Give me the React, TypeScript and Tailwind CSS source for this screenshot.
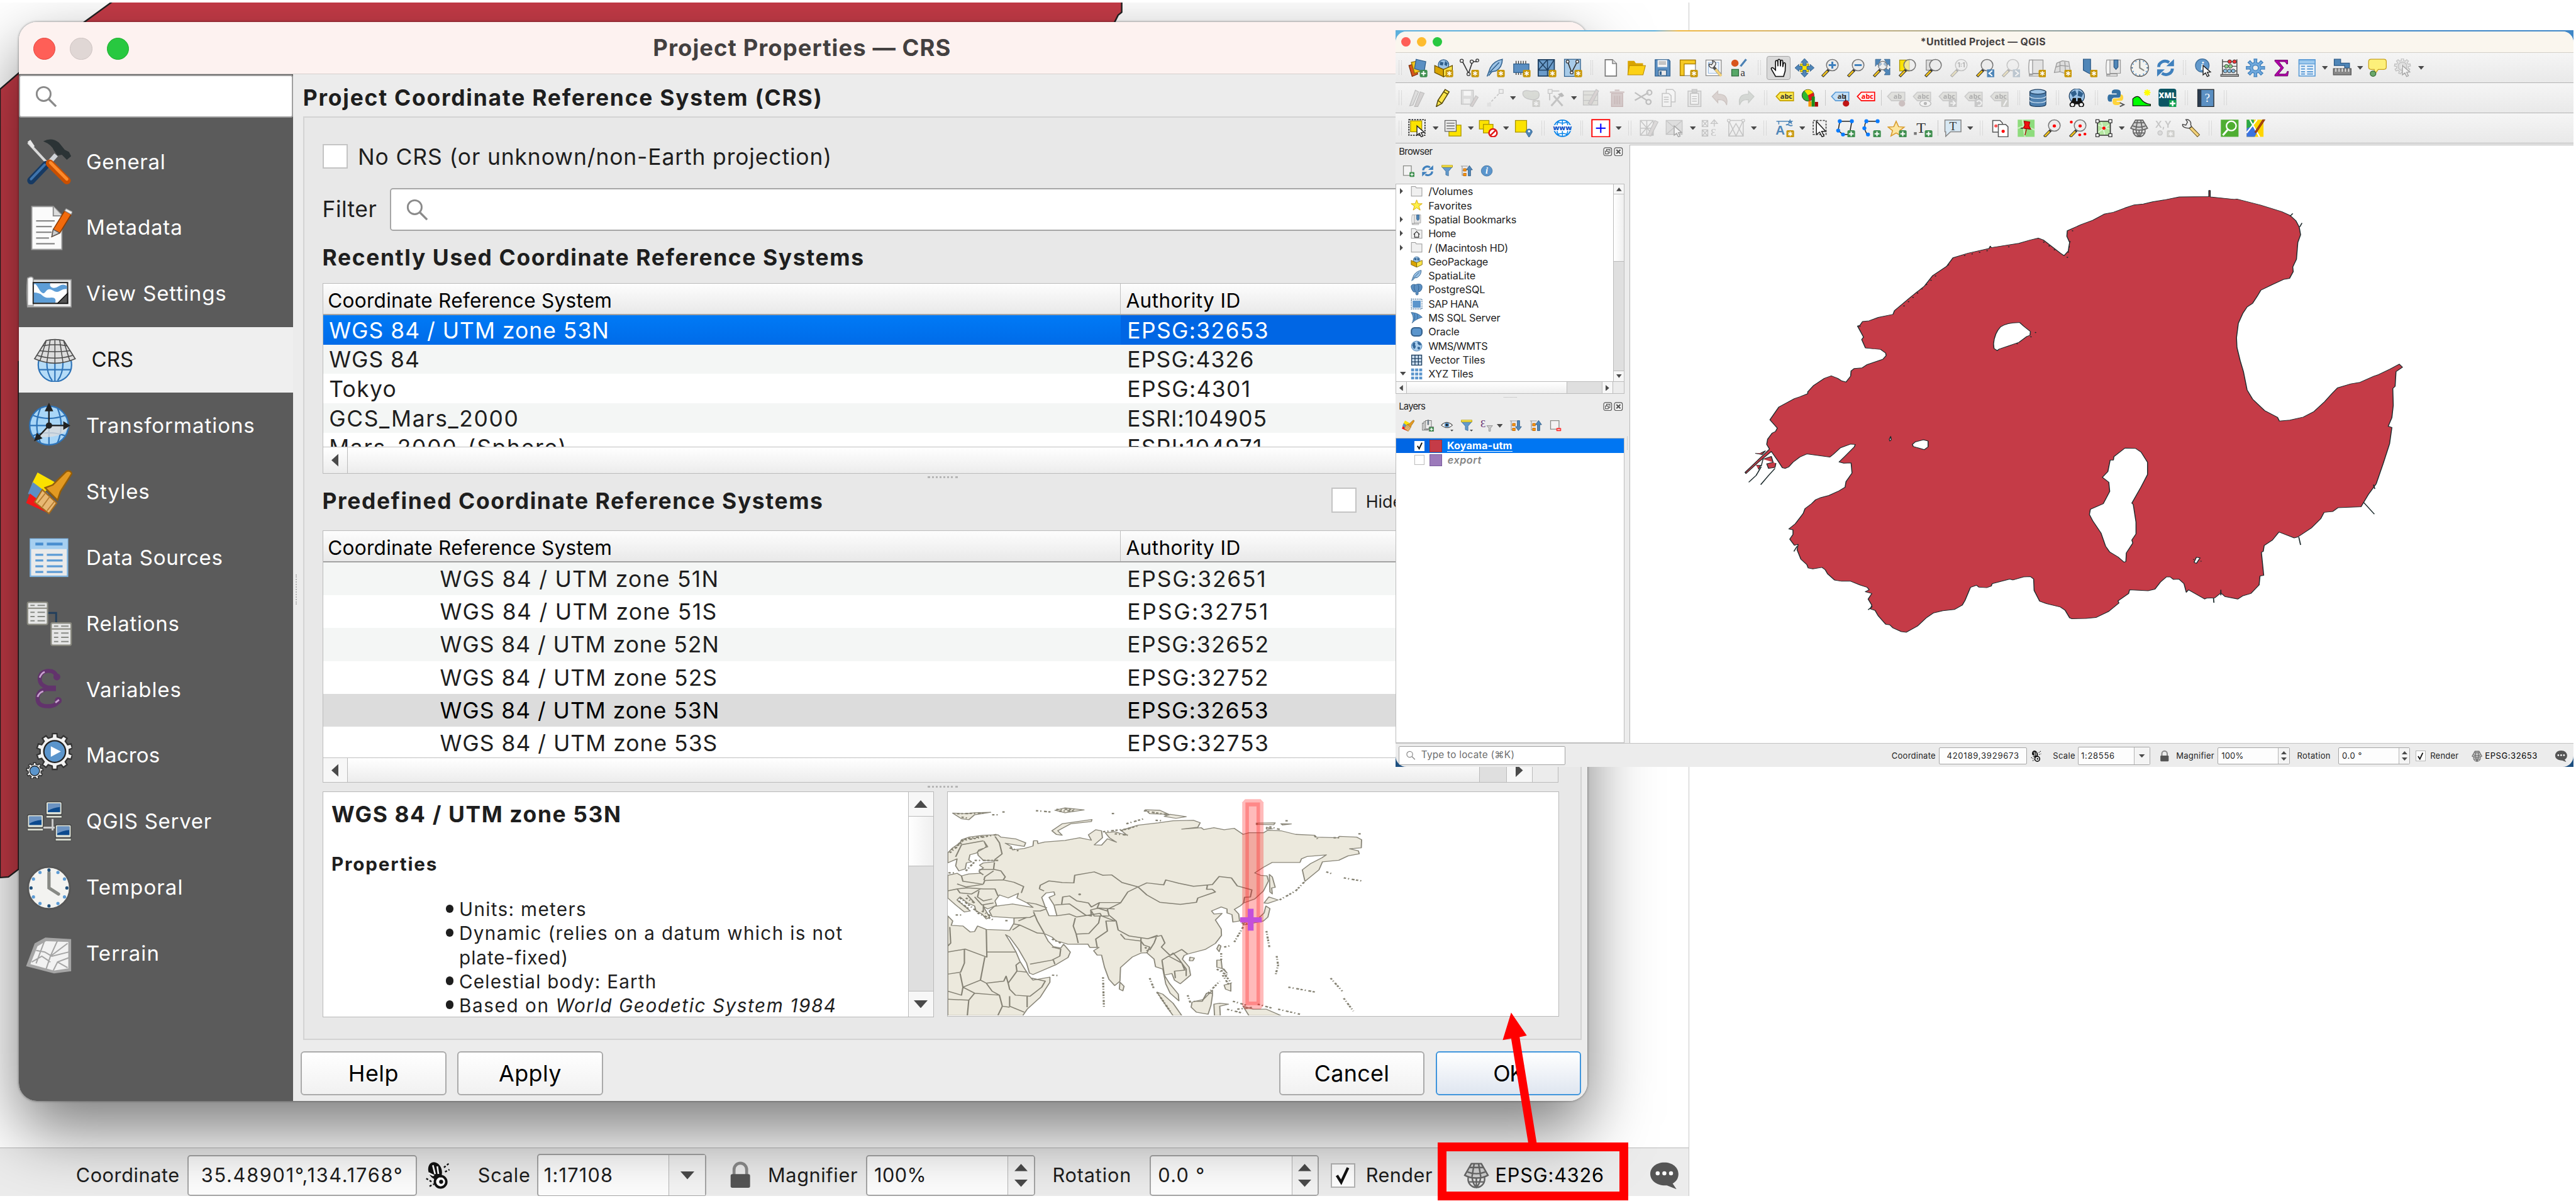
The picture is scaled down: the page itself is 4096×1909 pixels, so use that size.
import React, { useLayoutEffect, useRef, useState, type ReactNode } from "react";

/* Text run that spreads its letters to fill a given width. */
function T({ w, className = "", children }: { w?: number; className?: string; children: ReactNode }) {
  const ref = useRef<HTMLSpanElement>(null);
  const [ls, setLs] = useState(0);
  useLayoutEffect(() => {
    const el = ref.current;
    if (!el || !w) return;
    const n = (el.textContent || "").length || 1;
    setLs((w - el.offsetWidth) / n);
  }, []);
  return (
    <span ref={ref} style={{ letterSpacing: ls }} className={"inline-block shrink-0 whitespace-pre " + className}>
      {children}
    </span>
  );
}

/* ---------- shared icon pieces (24 x 24) ---------- */
const Star = ({ c = "#c8980a" }: { c?: string }) => (
  <g>
    <rect x="14.5" y="14.5" width="9.5" height="9.5" rx="1.5" fill={c} />
    <path d="M19.2 16.2v6M16.6 17.7l5.2 3M21.8 17.7l-5.2 3" stroke="#fff" strokeWidth="1.3" />
  </g>
);
const Plus = () => (
  <g>
    <rect x="14.5" y="14.5" width="9.5" height="9.5" rx="1.8" fill="#3f8f4f" />
    <path d="M19.2 16.2v6M16.2 19.2h6" stroke="#fff" strokeWidth="1.6" />
  </g>
);
const Mag = ({ children, fill = "#ececec" }: { children?: ReactNode; fill?: string }) => (
  <g>
    <path d="M10 14.5L2 23" stroke="#333" strokeWidth="3.6" />
    <path d="M8.5 16L2.6 22.4" stroke="#f4c51c" strokeWidth="2" />
    <circle cx="14.5" cy="8.5" r="7.3" fill={fill} stroke="#777" strokeWidth="1.2" />
    {children}
  </g>
);
const Cursor = () => <path d="M11 9v12l3-2.5 2.2 4.6 2.2-1-2.2-4.5 4-.3z" fill="#fff" stroke="#222" strokeWidth="1.1" />;
const Sheet = () => <path d="M5 1.5h9l5 5v16H5z" fill="#fff" stroke="#777" strokeWidth="1.3" />;
const Globe = () => (
  <g>
    <circle cx="12" cy="12" r="10.5" fill="#a9cdec" stroke="#4a80b4" strokeWidth="1.2" />
    <path d="M5 5c3-2 5 0 4 3s2 3 1 6-2 5-4 3-1-5-3-6zM14 3c3 0 6 2 7 5s-2 3-4 2-4-3-3-7zM14 14c2-1 5 0 5 2s-3 4-4 3-2-4-1-5z" fill="#34689a" />
  </g>
);
const Scroll = () => (
  <g>
    <path d="M6 2h14v17H6z" fill="#e3e3e3" stroke="#999" />
    <path d="M3 2h4v19H3c-1-6-1-13 0-19zM3 20h13v2.5H3z" fill="#f5f5f5" stroke="#999" />
  </g>
);
const Tag = ({ f, s, t = "#333", label = "abc" }: { f: string; s: string; t?: string; label?: string }) => (
  <g>
    <path d="M6 4.5h16.5v11H6L1 10z" fill={f} stroke={s} strokeWidth="1.3" />
    <text x="13.6" y="13.2" fontSize="8.5" fontWeight="700" textAnchor="middle" fill={t} fontFamily="Open Sans, sans-serif">
      {label}
    </text>
  </g>
);
const Funnel = () => (
  <g>
    <path d="M2 4h20l-7.5 9v9l-5-2v-7z" fill="#6299cc" stroke="#3f6f9c" />
    <rect x="2" y="1" width="20" height="3.6" fill="#fce94f" stroke="#b89a00" />
  </g>
);
const Refresh = () => (
  <g fill="none" stroke="#3f80bd" strokeWidth="3.8">
    <path d="M3.500 11c0-6 7-10 13-6" />
    <path d="M20.500 13c0 6-7 10-13 6" />
    <path d="M13 10h9.500V.800z" fill="#3f80bd" stroke="none" />
    <path d="M11 14H1.500v9.200z" fill="#3f80bd" stroke="none" />
  </g>
);
const Expand = ({ down = false }: { down?: boolean }) => (
  <g>
    <path d="M1 2.500h13M3.500 2.500v18h4M3.500 11h4" fill="none" stroke="#999" strokeWidth="1.4" />
    <rect x="6" y="7.500" width="5" height="5" fill="#f90" stroke="#b65c00" />
    <rect x="6" y="17" width="5" height="5" fill="#f90" stroke="#b65c00" />
    <path d={down ? "M15 2h4.500v12H23l-5.800 8-5.700-8H15z" : "M15 22h4.500V10H23l-5.800-8.500L11.500 10H15z"} fill="#4f86b8" stroke="#2d5a86" />
  </g>
);
const Net = ({ c = "#666" }: { c?: string }) => (
  <g fill="#d0d0d0" stroke={c} strokeWidth="1.4">
    <circle cx="12" cy="15.500" r="7.500" fill="#e6e6e6" />
    <path d="M12 13v10M8 13c.5 5 2 8 4 10 2-2 3.500-5 4-10M5.500 18h13" fill="none" />
    <path d="M7.500 1.500h9l6 10.500c-6 3.300-15 3.300-21 0z" />
    <path d="M10 1.500L8 13.500M14 1.500l2 12M6 5h12M4 9c5 2 11 2 16 0" fill="none" />
  </g>
);
const BrushArt = () => (
  <g>
    <path d="M3 8l3-6 9 5-6 6z" fill="#fbe100" />
    <path d="M1 13l2.500-6 8 6-4 5z" fill="#5d8fc4" />
    <path d="M0 18l2-5 8 6 1 4z" fill="#f01818" />
    <path d="M8.500 11l7.500 7-4 5.500-7.500-6z" fill="#e8b873" stroke="#a66b1c" strokeWidth=".7" />
    <path d="M6 18l4-5M8.500 20l4-5.500M11 22l4-5" stroke="#b67d33" strokeWidth=".6" />
    <path d="M10 10l6.500 6.500L18 12l6-9.500q-1-2-3-1L14 8.500z" fill="#e39a22" stroke="#945d08" strokeWidth=".8" />
  </g>
);
const Clock = () => (
  <g>
    <circle cx="12" cy="12" r="11" fill="#f3f3f0" stroke="#555" strokeWidth="1" />
    <path d="M12 4v8l5 3.200" fill="none" stroke="#888a85" strokeWidth="1.700" strokeLinecap="round" />
    {Array.from({ length: 12 }, (_, i) => (
      <circle key={i} cx={12 + 9.400 * Math.sin((i * Math.PI) / 6)} cy={12 - 9.400 * Math.cos((i * Math.PI) / 6)} r=".85" fill={i % 3 ? "#5b9bd5" : "#23527c"} />
    ))}
  </g>
);
const Feather = () => <path d="M2 23L6 12C9 6 15 2 21 1c0 7-3 12-8 15l-5 1-4 5M5 18L17 5" fill="#9cc3e6" stroke="#2f5f8c" strokeWidth="1.200" />;
const Pkg = () => (
  <g>
    <circle cx="12" cy="8" r="6.500" fill="#9cc3e6" stroke="#2f5f8c" />
    <path d="M8 4l4 1-1 4-4-1zM14 3l3 3-1 4-3-2z" fill="#2f5f8c" />
    <path d="M1 9l11 5v9.500L1 18z" fill="#d9a400" stroke="#6b5200" />
    <path d="M23 9l-11 5v9.500L23 18z" fill="#fbe54a" stroke="#6b5200" />
  </g>
);
const gear = (cx: number, cy: number, r1: number, r2: number, n: number) => {
  const p: string[] = [];
  for (let i = 0; i < n; i++) {
    const a = (i * 2 * Math.PI) / n;
    const s = Math.PI / n;
    [[r1, -0.550], [r2, -0.400], [r2, 0.400], [r1, 0.550]].forEach(([r, k]) => p.push((cx + r * Math.sin(a + k * s)).toFixed(2) + "," + (cy - r * Math.cos(a + k * s)).toFixed(2)));
  }
  return p.join(" ");
};

const icons: Record<string, ReactNode> = {
  layers: <g><path d="M1 9l6-2 5 13-7 3z" fill="#d8541c" stroke="#7a2c08" /><path d="M4 5l8-2 4 13-8 3z" fill="#f4c51c" stroke="#8d6b00" /><path d="M10 1l12 3-2 13-12-4z" fill="#5b8fc2" stroke="#2f5f8c" /><Plus /></g>,
  pkg: <g><Pkg /><Star /></g>,
  vnew: <g><path d="M3 3l8 16 5-15h6" fill="none" stroke="#333" strokeWidth="1.300" /><circle cx="2.500" cy="3" r="2" fill="#eee" stroke="#333" /><circle cx="15" cy="4" r="2" fill="#eee" stroke="#333" /><circle cx="22" cy="2.500" r="1.800" fill="#eee" stroke="#333" /><circle cx="11" cy="20" r="2" fill="#eee" stroke="#333" /><Star /></g>,
  feather: <g><Feather /><Star /></g>,
  chip: <g><path d="M6 3v18M9 3v18M12 3v18M15 3v18M18 3v18" stroke="#333" /><rect x="3" y="7" width="19" height="11" fill="#5b8fc2" stroke="#2f5f8c" /><Star /></g>,
  mesh: <g><path d="M1.500 1.500h20v21h-20z" fill="#6b9cca" stroke="#1f3f60" strokeWidth="1.400" /><path d="M1.500 15h20M13 1.500v21M1.500 1.500L13 15 21.500 1.500M13 1.500L1.500 15" fill="none" stroke="#1f3f60" strokeWidth="1.200" /><Star /></g>,
  virt: <g><rect x="2" y="1" width="20" height="22" fill="#a8cbe8" stroke="#2f5f8c" /><path d="M6 4l5 14 7-14" fill="none" stroke="#333" strokeWidth="1.300" /><circle cx="6" cy="4" r="1.800" fill="#fff" stroke="#333" /><circle cx="18" cy="4" r="1.800" fill="#fff" stroke="#333" /><circle cx="11" cy="18" r="1.800" fill="#fff" stroke="#333" /><Star /></g>,
  file: <g><Sheet /><path d="M14 1.500v5h5" fill="#ddd" stroke="#777" /></g>,
  folder: <g><path d="M1 3h8l2 3h9v14H1z" fill="#d9a400" /><path d="M3 9h20l-3 12H1z" fill="#fcd116" stroke="#b88a00" strokeWidth=".8" /></g>,
  save: <g><path d="M3 1.500h17l1.500 2v19H3z" fill="#5b8fc2" stroke="#2f5f8c" /><rect x="6" y="2" width="12" height="9" fill="#f3f3f3" /><path d="M7.500 4.500h9M7.500 7h9" stroke="#888" /><rect x="7" y="15" width="10" height="7" fill="#e8e8e8" stroke="#2f5f8c" /><rect x="8.500" y="16.500" width="2.500" height="4.500" fill="#2f5f8c" /></g>,
  layout: <g><rect x="2" y="2" width="19" height="20" fill="#fff" stroke="#888" /><path d="M2 2h19v5H7v15H2z" fill="#f6c924" stroke="#a87c00" /><Star /></g>,
  layman: <g><rect x="2" y="2" width="19" height="20" fill="#fff" stroke="#888" /><path d="M5 5h13v14H5z" fill="#eef4fb" stroke="#9bbbe0" /><path d="M9 8l11 13" stroke="#555" strokeWidth="3.600" /><path d="M14 14l7 8.500" stroke="#f3d27a" strokeWidth="3.200" /><path d="M6 7l3 1 2-3-1-2c3 0 5 3 4 5l-3 4C8 13 5 10 6 7z" fill="#eee" stroke="#444" /></g>,
  stylem: <g><circle cx="6" cy="6" r="4.500" fill="#d8541c" /><path d="M13 10l7-9" stroke="#4a80b4" strokeWidth="2.500" /><rect x="2" y="14" width="8.500" height="8.500" fill="#57a868" stroke="#2d6a3c" /><text x="13" y="22.500" fontSize="13" fontFamily="Liberation Serif, serif" fill="#333">a</text></g>,
  hand: <path d="M8 23L3 14c-1-2 1-3 2.500-1.500L8 15V4c0-2 2.500-2 2.700 0L11 10V2.500C11 .500 13.600.5 13.800 2.500L14 10l.5-6.500c.2-2 2.500-1.800 2.500 0L17 11l.8-4.500c.4-1.700 2.600-1.200 2.500.5L20 16l-2 7z" fill="#fff" stroke="#111" strokeWidth="1.300" />,
  pan: <g><rect x="7" y="7" width="10" height="10" fill="#fce300" stroke="#a89400" /><path d="M12 0l4.500 5H14v4h-4V5H7.500zM12 24l4.500-5H14v-4h-4v4H7.500zM0 12l5-4.500V10h4v4H5v2.500zM24 12l-5-4.500V10h-4v4h4v2.500z" fill="#4f86b8" stroke="#2d5a86" strokeWidth=".7" /></g>,
  zin: <Mag><path d="M14.500 4v9M10 8.500h9" stroke="#3f80bd" strokeWidth="2.400" /></Mag>,
  zout: <Mag><path d="M10 8.500h9" stroke="#3f80bd" strokeWidth="2.400" /></Mag>,
  zfull: <g><path d="M4 1h7L9 4l3 3-3 3-3-3-2 3zM22 1h-7l2 3-3 3 3 3 3-3 2 3zM22 21h-7l2-3-3-3 3-3 3 3 2-3z" fill="#4f86b8" stroke="#2d5a86" strokeWidth=".6" /><path d="M10 14.500L2 23" stroke="#333" strokeWidth="3.600" /><path d="M8.500 16L2.600 22.400" stroke="#f4c51c" strokeWidth="2" /><circle cx="13" cy="9" r="5.500" fill="#ececec88" stroke="#777" /></g>,
  zsel: <g><rect x="2" y="2" width="12" height="14" fill="#fce300" stroke="#a89400" /><Mag fill="#ececec99" /></g>,
  zlay: <g><rect x="3" y="2" width="11" height="13" fill="#ddd" stroke="#888" /><Mag /></g>,
  znat: <Mag><text x="14.500" y="11.500" fontSize="8" fontWeight="700" textAnchor="middle" fill="#333">1:1</text></Mag>,
  zlast: <g><Mag /><rect x="14.500" y="14" width="9.500" height="10" fill="#4f86b8" /><path d="M21 15.500l-4 3.500 4 3.500" fill="none" stroke="#fff" strokeWidth="1.600" /></g>,
  znext: <g><Mag /><rect x="14.500" y="14" width="9.500" height="10" fill="#4f86b8" /><path d="M17.500 15.500l4 3.500-4 3.500" fill="none" stroke="#fff" strokeWidth="1.600" /></g>,
  nmap: <g><Scroll /><Star /></g>,
  n3d: <g><path d="M5 6l7-3 8 1 2 13-7 2-6-2-7 1z" fill="#ddd" stroke="#999" /><path d="M4 11l6-2 10 1M9 4v13M15 4l1 14" fill="none" stroke="#999" /><Star /></g>,
  nbook: <g><path d="M6 1h9v15l4 6-8-4-5-3z" fill="#4f86b8" stroke="#2d5a86" /><Star /></g>,
  book: <g><Scroll /><path d="M12 2h5v9l-2.500 3L12 11z" fill="#4f86b8" stroke="#2d5a86" /></g>,
  clock: <Clock />,
  refresh: <Refresh />,
  ident: <g><circle cx="10" cy="9" r="8.500" fill="#6299cc" stroke="#3f6f9c" /><text x="10" y="14.500" fontSize="15" fontWeight="700" fontStyle="italic" textAnchor="middle" fill="#fff" fontFamily="Liberation Serif, serif">i</text><Cursor /></g>,
  abacus: <g><path d="M3 1v21M21 1v21M3 4h18M3 10h18M3 16h18" stroke="#555" strokeWidth="1.200" /><path d="M1 20.500h22v2.500H1z" fill="#aaa" stroke="#555" /><g stroke="#333" strokeWidth=".7"><circle cx="12" cy="4" r="2.400" fill="#e33" /><circle cx="18" cy="4" r="2.400" fill="#e33" /><circle cx="8" cy="10" r="2.400" fill="#8c8" /><circle cx="13" cy="10" r="2.400" fill="#8c8" /><circle cx="6.500" cy="16" r="2.400" fill="#8bd" /><circle cx="11.500" cy="16" r="2.400" fill="#8bd" /><circle cx="16.500" cy="16" r="2.400" fill="#8bd" /></g></g>,
  gear: <g><polygon points={gear(12, 12, 7, 11.500, 8)} fill="#6fa8dc" stroke="#3f80bd" /><circle cx="12" cy="12" r="3.500" fill="#eee" stroke="#3f80bd" /></g>,
  sigma: <path d="M4 2h16v5h-1.500C18 5 17 4 15 4H9l6 8-6.500 8H16c2 0 3-1.500 3.500-3.500H21L20 22.500H4V21l7.500-9L4 3.500z" fill="#b000a8" stroke="#5d0059" strokeWidth=".7" />,
  table: <g><rect x="2" y="1.500" width="20" height="21" fill="#eaf3fb" stroke="#5b9bd5" strokeWidth="1.300" /><path d="M2 2h20v5H2z" fill="#9cc9ee" stroke="#5b9bd5" /><path d="M4.500 10h5M4.500 13.500h5M4.500 17h5M4.500 20h5M12 10h7.500M12 13.500h7.500M12 17h7.500M12 20h7.500" stroke="#4a8fd0" strokeWidth="1.400" /></g>,
  ruler: <g><path d="M2 1h8v5h11v6h-6V9H2z" fill="#4f86b8" stroke="#2d5a86" /><rect x="1" y="13" width="22" height="8" fill="#888" stroke="#555" /><path d="M4 13v4M8 13v4M12 13v4M16 13v4M20 13v4" stroke="#fff" /></g>,
  tip: <g><path d="M4 1h16q3 0 3 3v7q0 3-3 3h-7l-5 7v-7H4q-3 0-3-3V4q0-3 3-3z" fill="#fdf07a" stroke="#c9a21c" /><circle cx="6.500" cy="19.500" r="3.500" fill="#6aa86a" stroke="#3b6b3b" /></g>,
  process: <g><polygon points={gear(11, 10, 7.500, 10, 9)} fill="#ddd" stroke="#666" /><circle cx="11" cy="10" r="5.500" fill="#bbb" stroke="#666" /><path d="M9 7l5 3-5 3z" fill="#fff" /><Cursor /></g>,
  pencils: <g><path d="M2 22L9 2l4 2-7 17z" fill="#bbb" stroke="#666" /><path d="M8 23l7-19 5 2-8 17z" fill="#a99" stroke="#666" /></g>,
  pencil: <path d="M3 23l2-8L14 1l5 3-9 15zM5 15l5 4M12 4l5 3" fill="#fbe54a" stroke="#55490a" strokeWidth="1.200" />,
  saved: <g><path d="M2 2h15v18H2z" fill="#bbb" stroke="#777" /><rect x="5" y="3" width="9" height="6" fill="#fff" /><rect x="5" y="13" width="8" height="6" fill="#eee" /><path d="M13 22l7-13 3 2-7 12z" fill="#b99" stroke="#777" /></g>,
  line: <g><path d="M4 20L19 4" stroke="#777" strokeDasharray="3 2" strokeWidth="1.400" /><rect x="17" y="1" width="5" height="5" fill="#eee" stroke="#777" /><rect x="2" y="18" width="5" height="5" fill="#ccc" /></g>,
  blob: <g><path d="M3 4c4-4 8 0 12-1s8 0 8 5-5 7-10 6-12-3-10-10z" fill="#a9b59c" stroke="#777" /><Star c="#998" /></g>,
  vertex: <g><path d="M4 3v12M4 3h12" stroke="#777" strokeWidth="1.400" /><rect x="2" y="1" width="5" height="5" fill="#eee" stroke="#777" /><path d="M6 22L18 8M20 22L9 9" stroke="#777" strokeWidth="2.400" /><path d="M14 7l5-2 3 4-3 2z" fill="#555" /></g>,
  formedit: <g><rect x="2" y="3" width="18" height="18" fill="#c4c4ae" stroke="#777" /><path d="M2 8h18M2 15h18" stroke="#777" /><path d="M8 19l10-18 3 2-9 18z" fill="#b99" stroke="#777" /></g>,
  trash: <g><rect x="5" y="6" width="14" height="17" fill="#c08080" stroke="#a44" /><path d="M3 4.500h18M9 2h6M9 9v11M12 9v11M15 9v11" stroke="#a55" strokeWidth="1.600" /></g>,
  cut: <g fill="none" stroke="#666" strokeWidth="1.800"><path d="M2 5l15 10M2 15L19 5" /><circle cx="19" cy="17" r="3" /><circle cx="20" cy="5" r="3" /></g>,
  copy: <g fill="#fff" stroke="#777" strokeWidth="1.200"><path d="M9 1h8l3 3v13H9z" /><path d="M4 6h8l3 3v14H4z" /><path d="M6 11h6M6 14h6M6 17h6" /></g>,
  paste: <g fill="#ddd" stroke="#777" strokeWidth="1.200"><path d="M4 3h16v20H4z" /><path d="M7 6h10v14H7z" fill="#fff" /><path d="M9 1h6v4H9z" fill="#999" /><path d="M9 10h6M9 13h6M9 16h6" /></g>,
  undo: <path d="M2 10l7-7v4c8 0 13 3 11 14-2-6-5-7-11-7v4z" fill="#c59a8c" stroke="#a07060" />,
  redo: <path d="M22 10l-7-7v4C7 7 2 10 4 21c2-6 5-7 11-7v4z" fill="#9cb09c" stroke="#7c8c7c" />,
  abc: <g><Tag f="#fce94f" s="#c4a000" /></g>,
  diagram: <g><circle cx="8.500" cy="8.500" r="7.500" fill="#2eb82e" stroke="#111" strokeWidth=".6" /><path d="M8.500 8.500L4 2.500C8 0 13 1 15 5z" fill="#fbe100" /><path d="M8.500 8.500L15 5c2 4 0 9-5 11z" fill="#e01818" /><rect x="9" y="16" width="4" height="7" fill="#f90" /><rect x="13" y="10" width="4" height="13" fill="#1b8c1b" /><rect x="17" y="17" width="4" height="6" fill="#a00" /></g>,
  tagpin: <g><Tag f="#c5e0f7" s="#5b9bd5" label="ab" /><circle cx="19" cy="19" r="4" fill="#c01515" /><path d="M18.500 8v8" stroke="#222" /></g>,
  tagred: <g><Tag f="#fff0f0" s="#f00" t="#f00" /></g>,
  tag1: <g><Tag f="#c4c4b0" s="#888" label="ab" /><circle cx="19" cy="19" r="4" fill="#a66" /></g>,
  tag2: <g><Tag f="#c4c4b0" s="#888" /><ellipse cx="16" cy="19" rx="7" ry="4" fill="#fff" stroke="#555" /><circle cx="16" cy="19" r="2" fill="#555" /></g>,
  tag3: <g><Tag f="#c4c4b0" s="#888" /><rect x="13" y="13" width="10" height="11" rx="1.500" fill="#888" /><path d="M15 18.500h5M18 15.500l3 3-3 3" stroke="#fff" strokeWidth="1.600" fill="none" /></g>,
  tag4: <g><Tag f="#c4c4b0" s="#888" /><rect x="13" y="13" width="10" height="11" rx="1.500" fill="#888" /><path d="M16 17a3 3 0 1 1 1 4" stroke="#fff" strokeWidth="1.600" fill="none" /></g>,
  tag5: <g><Tag f="#c4c4b0" s="#888" /><rect x="14" y="13" width="10" height="11" rx="1.500" fill="#998" /><path d="M17 22l4-7" stroke="#fff" strokeWidth="1.800" fill="none" /></g>,
  db: <g fill="#4f81b0" stroke="#1f3f60" strokeWidth="1"><path d="M2 4v16c0 4 20 4 20 0V4z" /><path d="M2 9.500c0 4 20 4 20 0M2 15c0 4 20 4 20 0" fill="none" stroke="#cfe2f3" /><ellipse cx="12" cy="4" rx="10" ry="3" fill="#9cc3e6" /></g>,
  metas: <g><circle cx="12" cy="9.500" r="9.500" fill="#9cc3e6" stroke="#1f3f60" /><path d="M4 5l6-3 2 5-5 4zM14 2l6 4-2 5-5-2z" fill="#2f5f8c" /><path d="M7 12h4v4h2v-4h4l3 8H4z" fill="#111" /><circle cx="6.500" cy="20.500" r="2.900" fill="#eee" stroke="#111" strokeWidth="1.500" /><circle cx="17.500" cy="20.500" r="2.900" fill="#eee" stroke="#111" strokeWidth="1.500" /></g>,
  python: <g><path d="M12 1c-5 0-5 2-5 5h6v1.500H4c-3 0-3 9 0 9h3c0-4 1-5 4-5h4c2 0 3-1 3-3V5c0-3-2-4-6-4z" fill="#3571a3" /><path d="M13 21c4 0 5-1 5-4h-5v-1.500h6c3 0 3-8 0-8h-1c0 4-1 5-4 5h-3c-3 0-3 1-3 4 0 3 1 4.500 5 4.500z" fill="#ffd43b" /><path d="M17 18l5 2.500-5 2.500" fill="none" stroke="#555" strokeWidth="1.500" /></g>,
  hill: <g><path d="M1 22V13q6-6 10 0t12 7v2z" fill="#0f0" stroke="#111" /><path d="M19 1v8M15 5h8M16 2l6 6M22 2l-6 6" stroke="#ff0" strokeWidth="1.800" /></g>,
  xml: <g><rect x="1" width="22" height="23" rx="3" fill="#0b5563" /><text x="12" y="12.500" fontSize="9.500" fontWeight="800" textAnchor="middle" fill="#fff" fontFamily="Open Sans, sans-serif">XML</text><rect x="14" y="14.500" width="9" height="9" fill="#12a150" /><path d="M18.500 15.500v7M15 19h7" stroke="#fff" strokeWidth="2" /></g>,
  help: <g><rect x="2" y="1" width="20" height="22" fill="#5b8fc2" stroke="#222" /><rect x="2" y="1" width="4.500" height="22" fill="#2b3b4d" /><text x="14" y="17" fontSize="15" textAnchor="middle" fill="#fff" fontFamily="Liberation Serif, serif">?</text></g>,
  selrect: <g><rect x="1" y="1" width="20" height="20" fill="none" stroke="#111" strokeDasharray="2 1.300" strokeWidth="1.300" /><rect x="3" y="2.500" width="14" height="14" fill="#fce300" stroke="#a89400" /><Cursor /></g>,
  selform: <g><rect x="7" y="8" width="15" height="14" fill="#fce300" stroke="#a89400" /><rect x="2" y="2" width="14" height="14" fill="#eee" stroke="#666" /><path d="M4 5.500h10M4 9h10M4 12.500h10" stroke="#777" strokeWidth="1.300" /></g>,
  desel: <g><rect x="1" y="2" width="12" height="11" fill="#fce300" stroke="#a89400" /><rect x="6" y="7" width="12" height="11" fill="#fce300" stroke="#a89400" /><circle cx="18" cy="18" r="5" fill="#fff" stroke="#e01818" strokeWidth="2" /><path d="M14.500 21.500l7-7" stroke="#e01818" strokeWidth="2" /></g>,
  selloc: <g><rect x="2" y="2" width="14" height="15" fill="#fce300" stroke="#a89400" /><path d="M19 24l-4-7a4 4 0 1 1 8 0z" fill="#4f86b8" stroke="#2d5a86" strokeWidth=".6" /><circle cx="19" cy="16" r="1.400" fill="#fff" /></g>,
  www: <g><circle cx="12" cy="12" r="10.500" fill="#fff" stroke="#0a84e8" strokeWidth="1.500" /><path d="M12 1.500v21M6 4q6 3 12 0M6 20q6-3 12 0M7 2.500q-4 9 0 19M17 2.500q4 9 0 19" fill="none" stroke="#0a84e8" strokeWidth="1.200" /><rect x="1" y="8" width="22" height="7.500" fill="#fff" /><text x="12" y="14.500" fontSize="8.500" fontWeight="800" textAnchor="middle" fill="#1155c8" fontFamily="Open Sans, sans-serif">www</text></g>,
  redplus: <g><rect x="1" y="1" width="22" height="22" fill="#fff" stroke="#f00" strokeWidth="1.500" /><path d="M12 6v12M6 12h12" stroke="#00f" strokeWidth="1.600" /></g>,
  meshed: <g><path d="M1 2h16v19H1zM1 12h16M9 2v19M1 2l16 19M17 2L1 21" fill="none" stroke="#777" strokeWidth="1.200" /><path d="M10 21L19 2l4 2-9 18z" fill="#baa" stroke="#777" /></g>,
  meshsel: <g><path d="M1 2h20v18H1z" fill="#bbb" stroke="#777" /><path d="M1 2l20 18M21 2L1 20" stroke="#777" /><Cursor /></g>,
  meshf: <g><path d="M2 2h7v8H2zM2 2l7 8M9 2l-7 8M2 14h7v8H2zM2 14l7 8M9 14l-7 8M17 1v9M13 6h8l-4-5z" fill="none" stroke="#777" strokeWidth="1.100" /><text x="12.500" y="22" fontSize="14" fill="#777" fontFamily="Liberation Serif, serif">Ɛ</text></g>,
  meshp: <g><path d="M3 2h18v20H3zM3 2l9 20 9-20M3 22L12 6l9 16" fill="none" stroke="#777" strokeWidth="1.200" /><circle cx="3" cy="2" r="1.800" fill="#eee" stroke="#777" /><circle cx="21" cy="2" r="1.800" fill="#eee" stroke="#777" /></g>,
  ann: <g><path d="M2 3h14M5 3v4" stroke="#4f86b8" strokeWidth="1.200" /><text x="1" y="20" fontSize="16" fontWeight="700" fill="#4f86b8" fontFamily="Liberation Sans, sans-serif">A</text><path d="M14 8c3-3 5 3 8 0" fill="none" stroke="#4f86b8" strokeWidth="1.500" /><path d="M19 0l1 2.500h3l-2 1.700.7 2.800-2.700-1.700L16.500 7l.7-2.800L15 2.500h3z" fill="#4f86b8" /><Star /></g>,
  annsel: <g><rect x="4" y="2" width="16" height="18" fill="none" stroke="#444" strokeDasharray="2.500 1.500" strokeWidth="1.300" /><path d="M8 3v17l4-3 3 6 2.500-1-3-6h5z" fill="#fff" stroke="#222" strokeWidth="1.200" /></g>,
  annpoly: <g><path d="M5 3h15l-3 17H9L3 15z" fill="none" stroke="#222" strokeWidth="1.200" /><g fill="#0a7cff"><circle cx="5" cy="3" r="2.500" /><circle cx="20" cy="3" r="2.500" /><circle cx="3" cy="15" r="2.500" /><circle cx="9" cy="20" r="2.500" /></g><Plus /></g>,
  annline: <g><path d="M20 3H6Q1 11 7 20" fill="none" stroke="#222" strokeWidth="1.200" /><g fill="#0a7cff"><circle cx="6" cy="3" r="2.500" /><circle cx="20" cy="3" r="2.500" /><circle cx="3.500" cy="12" r="2.500" /><circle cx="8" cy="20" r="2.500" /></g><Plus /></g>,
  annstar: <g><path d="M11 3l3 7 7 .5-5.500 4.500 2 7L11 18l-6.500 4 2-7L1 10.500 8 10z" fill="#fce5a0" stroke="#d79a2a" strokeWidth="1.200" /><Plus /></g>,
  anntext: <g><text x="10" y="18" fontSize="19" textAnchor="middle" fill="#333" fontFamily="Liberation Serif, serif">T</text><rect x="1" y="17" width="3.500" height="3.500" fill="#777" /><Plus /></g>,
  annt: <g><path d="M2 1.500h20v15H9l-6 6v-6H2z" fill="#d7e8f4" stroke="#888" strokeWidth="1.200" /><text x="12" y="14.500" fontSize="15" textAnchor="middle" fill="#333" fontFamily="Liberation Serif, serif">T</text></g>,
  gsheet: <g fill="#fff" stroke="#555" strokeWidth="1.200"><path d="M2 2h9l3 3v12H2z" /><path d="M9 7h9l3 3v13H9z" /><circle cx="6" cy="9" r="2" fill="#f55" stroke="none" /><circle cx="15" cy="16" r="2" fill="#f00" stroke="none" /></g>,
  gpin: <g><path d="M1 1h21v22H1z" fill="#8edc7d" /><path d="M1 12l9-3 12 5M7 1l3 22" stroke="#c8f0bc" strokeWidth="2" /><path d="M9 3l7 1-1 5 2 4-9-1 2-4zM12 13l-2 8" fill="#f01010" stroke="#a00" strokeWidth="1" /></g>,
  gmag: <Mag><circle cx="14.500" cy="9" r="2" fill="#f00" /></Mag>,
  gmags: <g><Mag><circle cx="14.500" cy="9" r="2" fill="#f00" /></Mag><circle cx="3.500" cy="4" r="1.800" fill="#f00" /><circle cx="14" cy="20.500" r="1.800" fill="#f00" /><circle cx="20.500" cy="19.500" r="1.800" fill="#f00" /></g>,
  gext: <g><path d="M4 3h16v18H4z" fill="#b5e6a2" stroke="#333" strokeWidth="1.300" /><path d="M5 8l14 5M9 4l4 16M5 17l13-9" stroke="#e8f8e0" strokeWidth="1.200" /><g fill="#fff" stroke="#333"><rect x="2" y="1" width="4" height="4" /><rect x="18" y="1" width="4" height="4" /><rect x="2" y="19" width="4" height="4" /><rect x="18" y="19" width="4" height="4" /></g><circle cx="12" cy="12" r="2" fill="#f00" /></g>,
  net: <Net />,
  xy: <g><text x="10" y="11" fontSize="12" textAnchor="middle" fill="#777" fontWeight="600">X,Y</text><circle cx="6" cy="18" r="2.800" fill="#bbb" stroke="#777" /><Star c="#998" /></g>,
  wrench: <g><path d="M8 7l14 15" stroke="#6b5520" strokeWidth="4.600" /><path d="M12 11.500l9.500 10" stroke="#f3d27a" strokeWidth="3" /><path d="M2 7l4 1 2-4-2-3c4-1 7 3 6 6l1 3-3 2C5 12 1 10 2 7z" fill="#eee" stroke="#444" strokeWidth="1.100" /></g>,
  greenmag: <g><rect x="1" y="1" width="22" height="22" fill="#4fae32" /><path d="M9.500 14L3.500 21" stroke="#fff" strokeWidth="2.400" /><circle cx="14" cy="9" r="6" fill="none" stroke="#fff" strokeWidth="1.800" /></g>,
  osm: <g><rect x="1" y="1" width="21" height="22" fill="#ffd500" /><path d="M1 12l8-4 6 8-4 7H1z" fill="#3b73e0" /><path d="M1 1h9v8l-9 3z" fill="#2ba84a" /><path d="M5 1l12 22M14 1L1 18" stroke="#fff" strokeWidth="1.800" /><path d="M11 17L21 1h3L13 18z" fill="#a84314" stroke="#7a2c08" strokeWidth=".6" /></g>,
  add: <g><rect x="3" y="2" width="15" height="19" fill="#f3f3f3" stroke="#888a85" strokeWidth="1.500" /><Plus /></g>,
  del: <g><rect x="3" y="2" width="16" height="17" fill="#f3f3f3" stroke="#888a85" strokeWidth="1.500" /><rect x="14" y="16.500" width="9" height="6.500" rx="1.500" fill="#f33" /><path d="M16 19.800h5" stroke="#fff" strokeWidth="1.500" /></g>,
  funnel: <Funnel />,
  up: <Expand />,
  down: <Expand down />,
  info: <g><circle cx="12" cy="12" r="10.500" fill="#5b95cc" stroke="#3f6f9c" /><text x="12" y="18" fontSize="17" fontWeight="700" fontStyle="italic" textAnchor="middle" fill="#fff" fontFamily="Liberation Serif, serif">i</text></g>,
  brush: <BrushArt />,
  grp: <g fill="#eee" stroke="#777" strokeWidth="1.200"><path d="M2 7h10v14H2z" /><path d="M5 4h11v15H5z" /><path d="M8 2h11v16H8z" /><path d="M12 1v9h2V1z" fill="#4f86b8" /><Plus /></g>,
  eye: <g><path d="M1 11q10-11 21 0-10 10-21 0z" fill="#fff" stroke="#555" strokeWidth="1.300" /><circle cx="11.500" cy="10.500" r="4.500" fill="#4f86b8" /><circle cx="11.500" cy="10.500" r="2" fill="#111" /><path d="M18 20h6l-3 3.500z" fill="#444" /></g>,
  funnel2: <g><Funnel /><path d="M18 20h6l-3 3.500z" fill="#444" /></g>,
  eps: <g><text x="0" y="15" fontSize="20" fill="#6a3576" fontFamily="Liberation Serif, serif">Ɛ</text><path d="M12 12h11l-4 5v6h-3v-6z" fill="#ccc" stroke="#888" /></g>,
  fold: <path d="M1.500 2h8l2 3h11v17h-21z" fill="#f0f0f0" stroke="#999" strokeWidth="1.300" />,
  fstar: <path d="M12 1l3 8h8l-6.500 5 2.500 8.500-7-5-7 5L7.500 14 1 9h8z" fill="#fdf04a" stroke="#d7a800" strokeWidth="1.200" />,
  fhome: <g><path d="M1.500 2h8l2 3h11v17h-21z" fill="#f0f0f0" stroke="#999" strokeWidth="1.300" /><path d="M6 14l6-6 6 6M8 13v7h8v-7" fill="none" stroke="#333" strokeWidth="1.500" /></g>,
  tpkg: <Pkg />,
  tfeather: <Feather />,
  pg: <g><path d="M1 5c1-4 6-4 9-3 4-2 10-2 12 1 2 5 0 10-3 13l-4 1v5c-1 2-4 2-4.500 0L10 16c-2 2-4 2-5 0C2 12 1 9 1 5z" fill="#5b8fc2" stroke="#2f5f8c" strokeWidth="1.200" /><path d="M8 3c-2 4-1 8 1 12M15 3c2 4 1 8 0 12" fill="none" stroke="#2f5f8c" strokeWidth="1.200" /></g>,
  hana: <g><rect x="4" y="5" width="16" height="15" fill="#5b95cc" /><rect x="1.500" y="2" width="21" height="20.500" fill="none" stroke="#2f5f8c" strokeWidth="1.800" strokeDasharray="1.800 1.800" /></g>,
  mssql: <path d="M1 1c8 0 16 3 22 10-6 2-14 5-20 12 4-8 2-16-2-22zM7 3c2 4 2 9 0 14M13 5c1 3 1 6 0 9" fill="#5b95cc" stroke="#2f5f8c" strokeWidth="1.100" />,
  ora: <rect x="1.500" y="4" width="21" height="17" rx="6" fill="#5b95cc" stroke="#34608c" strokeWidth="2.600" />,
  globe: <Globe />,
  vt: <path d="M2 2h20v21H2zM2 9h20M2 16h20M8.700 2v21M15.400 2v21" fill="#cfe2f3" stroke="#1f3f60" strokeWidth="1.700" />,
  xyz: <g fill="#5b95cc">{[1, 9, 17].map((x) => [1, 9.500, 18].map((y) => <rect key={x + "-" + y} x={x} y={y} width="6" height="6" />))}</g>,
};

const Ico = ({ n, className }: { n: string; className: string }) => (
  <svg viewBox="0 0 24 24" preserveAspectRatio="none" className={"shrink-0 " + className}>
    {icons[n]}
  </svg>
);

const Tri = ({ d, className }: { d: "u" | "d" | "l" | "r"; className: string }) => (
  <svg viewBox="0 0 10 10" preserveAspectRatio="none" className={"shrink-0 " + className}>
    <path d={{ u: "M0 10h10L5 0z", d: "M0 0h10L5 10z", l: "M10 0v10L0 5z", r: "M0 0v10l10-5z" }[d]} fill="#4a4a4a" />
  </svg>
);

const bars = [
  "g layers pkg vnew feather chip mesh virt g file folder save layout layman stylem g hand pan zin zout zfull zsel zlay -znat zlast -znext nmap n3d nbook book clock refresh g ident abacus gear sigma table t ruler t tip -process t",
  "g -pencils pencil -saved -line t -blob -vertex t -formedit -trash -cut -copy -paste -undo -redo g abc diagram s tagpin tagred s -tag1 -tag2 -tag3 -tag4 -tag5 g db g metas g python hill xml g help g",
  "g selrect t selform t desel t selloc g www g redplus t g -meshed -meshsel t -meshf -meshp t g ann t annsel annpoly annline annstar anntext s annt t g gsheet gpin gmag gmags gext t net -xy wrench g greenmag osm",
];

function Toolbar({ items }: { items: string }) {
  return (
    <div className="flex h-[50px] items-center border-b-2 border-[#b4b4b4] bg-gradient-to-b from-[#f5f5f5] to-[#e9e9e9]">
      {items.split(" ").map((k, i) => {
        if (k === "g")
          return (
            <div key={i} className={"flex shrink-0 items-center justify-center gap-[3px] " + (i ? "w-[21.500px]" : "w-[16px]")}>
              <div className="h-[24px] border-l-2 border-dotted border-[#c4c4c4]" />
              <div className="h-[24px] border-l-2 border-dotted border-[#c4c4c4]" />
            </div>
          );
        if (k === "t")
          return (
            <div key={i} className="flex w-[15.800px] shrink-0 justify-center">
              <Tri d="d" className="h-[6px] w-[10px]" />
            </div>
          );
        if (k === "s") return <div key={i} className="mx-[3px] h-[26px] w-px shrink-0 bg-[#c9c9c9]" />;
        const off = k[0] === "-";
        const n = off ? k.slice(1) : k;
        return (
          <div key={i} className="flex w-[42.800px] shrink-0 items-center justify-center">
            <div className={n === "hand" ? "flex h-[40px] w-[40px] items-center justify-center rounded-[4px] border border-[#a5a5a5] bg-[#d9d9d9]" : ""}>
              <Ico n={n} className={"h-[31px] w-[32px] " + (off ? "opacity-35 saturate-50" : "")} />
            </div>
          </div>
        );
      })}
    </div>
  );
}

/* ---------- status bar, used by both windows ---------- */
const Bug = () => (
  <svg viewBox="0 0 24 24" className="h-[48px] w-[44px]">
    <ellipse cx="9" cy="8" rx="6" ry="8" transform="rotate(-20 9 8)" fill="#111" />
    <path d="M7 3l2 8M11 4l1 7M3 10l10 5" stroke="#fff" strokeWidth="1.500" />
    <circle cx="14" cy="18" r="5.200" fill="#fff" stroke="#111" strokeWidth="2.200" />
    <circle cx="14.500" cy="18" r="1.800" fill="#111" />
    <path d="M8 14q3-3 7-1" stroke="#111" strokeWidth="2.500" fill="none" />
    <path d="M17 5l5-4M18 9l4-2M1 15l5 3M4 22l4-2" stroke="#111" strokeWidth="1.400" strokeDasharray="2 1.500" />
  </svg>
);
const Lock = () => (
  <svg viewBox="0 0 20 24" className="h-[48px] w-[38px]">
    <path d="M4.500 12V7a5.500 5.500 0 0 1 11 0v5" fill="none" stroke="#8a8a8a" strokeWidth="2.600" />
    <rect x="1.500" y="11" width="17" height="12" rx="1.500" fill="#555" />
  </svg>
);
const Bubble = () => (
  <svg viewBox="0 0 24 22" className="h-[48px] w-[51px]">
    <path d="M12 1c6.500 0 11 4 11 9 0 3.500-1.800 6-4.500 7.500l3 4.500-7.500-3c-8 .5-13-4-13-9s4.500-9 11-9z" fill="#555" />
    <circle cx="6.800" cy="9.500" r="1.600" fill="#fff" /><circle cx="12" cy="9.500" r="1.600" fill="#fff" /><circle cx="17.200" cy="9.500" r="1.600" fill="#fff" />
  </svg>
);
const Spin = ({ children }: { children: ReactNode }) => (
  <div className="flex h-[67px] w-[281px] overflow-hidden rounded-[5px] border-[3px] border-[#a6a6a6] bg-white/90">
    <div className="flex flex-1 items-center pl-[12px]">{children}</div>
    <div className="flex w-[43px] flex-col items-center justify-center gap-[14px] border-l-2 border-[#b5b5b5] bg-[#f4f4f4]">
      <Tri d="u" className="h-[12px] w-[22px]" />
      <Tri d="d" className="h-[12px] w-[22px]" />
    </div>
  </div>
);
function StatusBar({ small }: { small?: boolean }) {
  return (
    <div className="flex items-center text-[32px] text-[#1d1d1d]">
      <T w={172} className="mr-[13px]">Coordinate</T>
      <div className={"mr-[14px] flex h-[68px] items-center justify-center rounded-[5px] border-[3px] border-[#a6a6a6] bg-white/90 " + (small ? "w-[344px]" : "w-[381px]")}>
        {small ? <T w={284}>420189,3929673</T> : <T w={336}>35.48901°,134.1768°</T>}
      </div>
      <Bug />
      <T w={87} className="mr-[11px] ml-[43px]">Scale</T>
      <div className="mr-[37px] flex h-[71px] w-[281px] rounded-[5px] border-[3px] border-[#a6a6a6] bg-white/90">
        <div className="flex flex-1 items-center pl-[9px]">
          {small ? <T w={132}>1:28556</T> : <T w={115}>1:17108</T>}
        </div>
        <div className="flex w-[61px] items-center justify-center border-l-2 border-[#b5b5b5] bg-[#f4f4f4]">
          <Tri d="d" className="h-[13px] w-[23px]" />
        </div>
      </div>
      <Lock />
      <T w={149} className="mr-[13px] ml-[27px]">Magnifier</T>
      <Spin><T w={87}>100%</T></Spin>
      <T w={131} className="mr-[30px] ml-[29px]">Rotation</T>
      <Spin><T w={79}>0.0 °</T></Spin>
      <div className="ml-[20px] flex h-[41px] w-[41px] items-center justify-center border-[3px] border-[#b5b5b5] bg-white">
        <svg viewBox="0 0 24 24" className="h-[34px] w-[34px]"><path d="M5 12l5 8L18 3" fill="none" stroke="#111" strokeWidth="3.200" /></svg>
      </div>
      <T w={111} className="mr-[49px] ml-[17px]">Render</T>
      <svg viewBox="0 0 24 24" className="h-[44px] w-[47px]"><Net /></svg>
      {small ? <T w={205} className="mr-[67px] ml-[7px] text-black">EPSG:32653</T> : <T w={181} className="mr-[74px] ml-[8px] text-black">EPSG:4326</T>}
      <Bubble />
    </div>
  );
}

/* ---------- dialog sidebar ---------- */
const Monitor = ({ x, y }: { x: number; y: number }) => (
  <g>
    <rect x={x} y={y} width="11" height="9" rx="1" fill="#dfe3d8" stroke="#444" strokeWidth=".6" />
    <rect x={x + 1.200} y={y + 1.200} width="8.600" height="6" fill="#0c4a8e" />
    <path d={`M${x + 1.200} ${y + 1.200}h8.600v2.400q-5 .5-8.600 2.600z`} fill="#6c93c2" />
    <rect x={x} y={y + 9.600} width="11" height="1.600" fill="#dfe3d8" stroke="#444" strokeWidth=".4" />
  </g>
);
const MiniTable = ({ x, y }: { x: number; y: number }) => (
  <g>
    <rect x={x} y={y} width="14" height="15.500" rx="1" fill="#e6e6e6" stroke="#8a8a80" strokeWidth="1" />
    <path d={`M${x} ${y + 4.200}h14`} stroke="#8a8a80" strokeWidth=".9" />
    {[2.200, 7, 10, 13].map((d) => (
      <path key={d} d={`M${x + 2} ${y + d}h3M${x + 7} ${y + d}h5.200`} stroke="#888a85" strokeWidth=".9" />
    ))}
  </g>
);
const GlobeNet = () => (
  <g>
    <circle cx="16" cy="16" r="13.500" fill="#a9d6f7" stroke="#2f74b8" strokeWidth="1" />
    <path d="M16 2.500v27M2.500 16h27M5 9q11 4 22 0M5 23q11-4 22 0M10 4q-5 12 0 24M22 4q5 12 0 24" fill="none" stroke="#2f74b8" strokeWidth="1" />
  </g>
);
const sideIcons: ReactNode[] = [
  <g>
    <path d="M1.500 2.500L15 17" stroke="#d9d9d9" strokeWidth="1.800" />
    <path d="M1 2l2-1.500L6 5 4.500 6.500z" fill="#e8e8e8" />
    <path d="M21 11L14 19" stroke="#cfd3d8" strokeWidth="3.200" />
    <path d="M14 18L3.500 29" stroke="#173a63" strokeWidth="5.400" strokeLinecap="round" />
    <path d="M13 18L3.500 28" stroke="#3f74ad" strokeWidth="1.800" strokeLinecap="round" />
    <path d="M16.500 17l12 12" stroke="#c94f00" strokeWidth="5.400" strokeLinecap="round" />
    <path d="M17 16.500l11.500 11.500" stroke="#ff8a2a" strokeWidth="2.200" strokeLinecap="round" />
    <path d="M12 1.500q6-3 11 1l4 5 3 1.500 1.500 3-3 2.500-3.500-3.500-3 .5L19.500 8Q18 4 12 1.500z" fill="#2b3335" />
  </g>,
  <g>
    <path d="M4 1h15l6 6v24H4z" fill="#fbfbfb" stroke="#9a9a9a" strokeWidth=".8" />
    <path d="M19 1v6.500h6" fill="#ddd" stroke="#888" strokeWidth=".8" />
    <path d="M7 11h13M7 15h11M7 19h11M7 23h9M7 27h13" stroke="#8a8a8a" strokeWidth="1" />
    <path d="M18 22l1-5L27 4l4.500 2.500-8 13z" fill="#f26a0c" stroke="#8e3b00" strokeWidth=".7" />
    <path d="M18 22l1-5 4.500 2.500z" fill="#ccc" stroke="#555" strokeWidth=".6" />
    <path d="M27 4l4.500 2.500.8-1.800L28 2.500z" fill="#eee" stroke="#999" strokeWidth=".5" />
  </g>,
  <g>
    <path d="M4 6h27.500v19H1q-1-10 0-20h3z" fill="#ececec" stroke="#999" strokeWidth=".7" />
    <path d="M1 5q3-2 4 0v19H1z" fill="#fafafa" stroke="#999" strokeWidth=".7" />
    <rect x="5" y="8" width="24" height="14.500" fill="#fff" stroke="#222" strokeWidth=".9" />
    <path d="M5.400 8.400H17q-1 2 1 3t5-1 5.600 0v2q-3 0-5 1.500t-5-.5-5 1-5-2.500-3.200-1zM5.400 15q4 0 6 2t6 1.500 3 3.500H5.400z" fill="#5d9dd6" />
    <path d="M29 15.500l-7 7h7z" fill="#555" stroke="#111" strokeWidth=".7" />
  </g>,
  <g>
    <circle cx="16" cy="19.500" r="12.300" fill="#b5dcf8" stroke="#2f74b8" strokeWidth="1" />
    <path d="M16 17v15M4 23h24M10 17q0 9 4 14M22 17q0 9-4 14" fill="none" stroke="#2f74b8" strokeWidth="1" />
    <path d="M9.500 1.500q6.500-1.500 13 0L31 15q-15 6.500-30 0z" fill="#dcdcdc" stroke="#4c4c4c" strokeWidth=".8" />
    <path d="M16 1v17.500M12.500 1L10 18M19.500 1L22 18M9.500 2L5 16.500M22.500 2L27 16.500M7 5.500q9-2 18 0M5 9q11 1.500 22 0M3 12.500q13 4 26 0" fill="none" stroke="#4c4c4c" strokeWidth=".7" />
  </g>,
  <g>
    <GlobeNet />
    <path d="M16 16h14q-3 9-21 8z" fill="#ddd" opacity=".8" />
    <path d="M16 17V3M16 16h13M16 16l-8 8.500" stroke="#222" strokeWidth="1" />
    <path d="M16 0l3 6h-6zM31 16l-5-3v6zM5.500 27l2-6 4 4z" fill="#222" /><circle cx="16" cy="16" r="2.200" fill="#222" />
  </g>,
  <g transform="scale(1.333)"><BrushArt /></g>,
  <g>
    <rect x="3" y="3" width="26" height="26" fill="#eaeaea" stroke="#7eb4e2" strokeWidth="1" />
    <rect x="3" y="3" width="26" height="7" fill="#a6cff0" />
    <path d="M6.500 6.500h5.500M14.500 6.500h11" stroke="#4a8fd0" strokeWidth="2" />
    {[14, 18, 22, 26].map((y) => <path key={y} d={`M6.500 ${y}h5.500M14.500 ${y}h11`} stroke="#5b9bd5" strokeWidth="1.400" />)}
  </g>,
  <g><path d="M15 8.500h6V18" fill="none" stroke="#233f5c" strokeWidth="1.300" /><MiniTable x={1} y={1} /><MiniTable x={17.500} y={15.500} /></g>,
  <g>
    <path d="M21 6q-1-3.500-6-3.200Q9.500 3.500 9.500 8.500q0 4.500 6 6h4v1h-5Q8 16.500 8 22q0 5.500 7 5.500 6 0 8-4" fill="none" stroke="#62336c" strokeWidth="2.800" />
    <circle cx="21.500" cy="7" r="2.400" fill="#62336c" /><circle cx="22.500" cy="23.500" r="2.400" fill="#62336c" />
    <path d="M9.500 7.500q1-3 3.500-4M8 21q1-3 4-4M20.500 25l2.500-2" stroke="#c9a3d0" strokeWidth="1.200" fill="none" />
  </g>,
  <g>
    <polygon points={gear(20, 13, 10.300, 12.600, 10)} fill="#f2f2f2" stroke="#333" strokeWidth="1" />
    <circle cx="20" cy="13" r="7.600" fill="#5b95cc" stroke="#222" strokeWidth="1" /><path d="M17.300 9.300l7 3.700-7 3.700z" fill="#fff" />
    <polygon points={gear(6, 26.500, 4.600, 5.800, 9)} fill="#f2f2f2" stroke="#333" strokeWidth=".7" /><circle cx="6" cy="26.500" r="3.400" fill="#5b95cc" stroke="#222" strokeWidth=".6" />
  </g>,
  <g><path d="M12 20h8M18.500 14v8" stroke="#ccc" strokeWidth="1.300" /><Monitor x={14} y={2} /><Monitor x={1} y={11} /><Monitor x={20.500} y={18} /></g>,
  <g transform="scale(1.333)"><Clock /></g>,
  <g>
    <path d="M0 25L6 9l7.500-4L31.500 6v22.500l-12 1.500z" fill="#a5a5a5" />
    <path d="M3 23.500L8 11l6-3.500L29.500 8v18.500l-10 1.500z" fill="#f2f2f2" />
    <path d="M7 14l6 1 5 3 12-3M13 7l-6 16M22 7l-5 11-3 9M29 9L17 18M4 22l7-4 6 4M19 28l3-6 8-3M22 22l7 4" fill="none" stroke="#a5a5a5" strokeWidth=".9" />
  </g>,
];
const sideItems: [string, number][] = [
  ["General", 132], ["Metadata", 160], ["View Settings", 234], ["CRS", 70], ["Transformations", 281], ["Styles", 106], ["Data Sources", 227],
  ["Relations", 155], ["Variables", 158], ["Macros", 123], ["QGIS Server", 209], ["Temporal", 161], ["Terrain", 122],
];

const SearchIcon = ({ className }: { className: string }) => (
  <svg viewBox="0 0 24 24" className={"shrink-0 " + className}>
    <circle cx="9.500" cy="9.500" r="7.300" fill="none" stroke="#8a8a8a" strokeWidth="1.900" />
    <path d="M15 15l7.500 7.500" stroke="#8a8a8a" strokeWidth="2.200" />
  </svg>
);
const Dots = ({ className }: { className: string }) => <div className={"border-dotted border-[#b5b5b5] " + className} />;

const recent: [string, number, string, number][] = [
  ["WGS 84 / UTM zone 53N", 465, "EPSG:32653", 236],
  ["WGS 84", 151, "EPSG:4326", 211],
  ["Tokyo", 113, "EPSG:4301", 206],
  ["GCS_Mars_2000", 316, "ESRI:104905", 232],
  ["Mars_2000_(Sphere)", 396, "ESRI:104971", 225],
];
const zones = ["51N", "51S", "52N", "52S", "53N", "53S"];
const zoneIds = ["EPSG:32651", "EPSG:32751", "EPSG:32652", "EPSG:32752", "EPSG:32653", "EPSG:32753"];

const TableHead = () => (
  <div className="flex h-[52px] shrink-0 border-b-[3px] border-[#a2a2a2] bg-gradient-to-b from-[#fdfdfd] to-[#e9e9e9] text-[33px] text-black">
    <div className="flex w-[1324px] items-center border-r-2 border-[#c0c0c0] pl-[8px] pt-[5px]"><T w={472}>Coordinate Reference System</T></div>
    <div className="flex items-center pl-[9px] pt-[5px]"><T w={190}>Authority ID</T></div>
  </div>
);

const Check = ({ className }: { className: string }) => <div className={"shrink-0 border-[3px] border-[#c4c4c4] bg-white " + className} />;

const Btn = ({ children, w, primary }: { children: string; w: number; primary?: boolean }) => (
  <div className={"flex h-[73px] w-[242px] items-center justify-center rounded-[6px] border-[3px] text-[37.500px] text-black " + (primary ? "border-[#3f95dc] bg-gradient-to-b from-white to-[#dfe6f0]" : "border-[#aaaaaa] bg-gradient-to-b from-white to-[#f1f1f1]")}>
    <T w={w}>{children}</T>
  </div>
);

/* ---------- map of Asia ---------- */
const mainland =
  "M28,462 60,452 75,465 100,455 140,452 135,440 150,425 137,412 150,400 185,395 190,388 150,388 132,362 130,345 152,328 160,318 152,292 165,320 135,335 128,350 104,360 100,385 110,395 92,400 88,430 66,440 55,415 60,380 28,400 28,350 45,325 70,300 75,285 100,272 150,262 200,260 210,272 260,280 295,300 290,318 225,302 245,318 250,335 290,328 320,316 322,290 335,290 337,304 360,296 430,288 480,275 520,287 510,260 535,235 555,240 558,275 530,310 555,312 575,280 606,297 582,275 568,250 600,245 642,262 622,238 680,212 750,200 800,190 870,188 893,200 885,222 830,232 897,225 905,234 940,225 975,235 1010,228 1040,258 1060,250 1110,250 1125,237 1170,240 1220,258 1285,262 1290,272 1365,275 1370,268 1430,272 1446,285 1445,325 1405,330 1435,340 1438,355 1400,365 1368,387 1312,395 1300,435 1252,492 1243,435 1270,405 1310,375 1325,360 1260,368 1240,380 1235,398 1140,398 1112,420 1080,450 1100,462 1122,465 1127,490 1110,540 1080,580 1042,600 1030,615 1010,632 1025,655 1028,690 1005,695 1002,658 985,650 985,630 965,620 932,640 940,655 968,652 945,685 965,730 966,762 945,802 910,832 850,855 838,862 832,880 855,920 860,960 825,1003 805,985 796,952 770,960 788,1002 818,1055 820,1088 790,1050 775,1003 765,930 740,918 735,880 710,848 690,850 660,870 620,922 618,990 600,1012 580,980 565,920 555,860 540,860 528,838 546,822 515,822 508,805 440,806 418,796 400,790 385,770 358,752 372,790 390,818 415,825 425,806 448,845 440,872 400,907 320,957 308,950 298,900 270,830 240,770 226,758 240,790 262,845 275,890 305,960 320,985 378,970 378,995 345,1070 300,1130 285,1162 28,1162 28,665 45,690 40,712 80,715 105,745 120,742 130,715 160,732 240,737 255,700 255,675 180,668 170,640 188,617 250,605 320,622 300,600 265,575 270,552 235,575 205,560 190,590 195,612 165,630 150,618 172,672 160,680 145,655 125,640 120,615 95,600 70,570 60,585 105,640 85,645 55,610 28,575Z";
const caspian = "M350,572 365,550 392,545 395,560 375,572 392,610 402,664 375,664 362,620Z";
const islands = [
  "M385,240 420,205 522,184 520,194 450,205 405,240 420,262 400,258Z", "M1130,458 1140,470 1150,522 1138,525 1140,555 1132,545Z", "M1128,570 1160,585 1125,602 1112,600Z",
  "M1118,615 1132,628 1125,670 1110,690 1060,705 1040,710 1045,698 1090,680 1112,650Z", "M957,808 964,815 958,843 950,828Z", "M618,995 632,1015 628,1038 616,1030Z",
  "M858,870 873,875 868,888 856,888Z", "M745,1045 765,1055 800,1100 830,1162 800,1162 775,1110Z", "M865,1095 905,1080 935,1035 935,1060 930,1110 920,1155 880,1145 862,1120Z",
  "M950,885 965,885 968,925 985,950 975,930 950,920Z", "M975,1010 998,1000 998,1040 980,1030Z", "M940,1105 960,1100 990,1105 960,1115 962,1162 942,1162Z", "M1040,1115 1075,1130 1120,1130 1170,1162 1060,1162Z",
  "M45,152 90,155 120,150 175,148 120,160 100,185 75,180Z", "M395,138 430,126 495,136 430,150Z", "M705,135 755,138 785,158 720,155Z", "M790,158 845,170 810,178 770,168Z", "M1085,202 1150,200 1145,210 1090,208Z", "M1120,222 1140,230 1120,232Z", "M1170,205 1205,206 1175,211Z",
].join("");
const borders =
  "M188,385 214,355 205,300 190,268 M150,290 75,310 55,370 M188,398 185,432 210,440 225,470 218,485 255,497 288,518 280,550 M150,505 155,488 218,485 M75,465 80,492 150,507 M135,433 185,432 M150,460 135,445 M152,487 155,470 185,440 M60,505 90,520 150,507 M28,540 60,530 95,525 150,530 190,530 200,565 M60,530 70,550 110,555 140,530 M135,540 130,570 150,590 180,580 M95,560 120,600 M120,570 145,610 185,600 M150,610 150,640 " +
  "M342,530 345,512 375,490 420,498 460,500 463,462 530,445 560,462 590,460 625,498 680,520 710,500 768,510 775,485 820,502 870,517 935,508 958,468 1000,475 1020,515 1070,535 1065,570 1045,572 1042,600 M342,530 358,540 M680,520 710,560 755,597 825,607 880,597 885,575 945,545 935,532 915,532 918,510 M680,520 645,545 620,600 575,632 580,660 605,690 612,735 650,765 712,778 760,762 772,800 760,820 790,862 830,832 850,855 " +
  "M418,610 422,570 445,565 470,590 510,600 520,620 548,598 620,598 M395,610 445,605 500,660 520,665 518,635 545,625 600,630 M548,598 540,625 575,640 M520,640 530,665 580,665 M402,664 445,655 470,670 550,652 555,665 600,690 M465,675 458,715 468,755 512,752 545,700 550,665 M468,755 475,800 M602,690 570,690 575,740 535,780 540,820 M620,755 635,780 690,790 M690,790 700,810 720,820 710,850 M690,775 690,845 M715,778 745,762 735,800 720,835 " +
  "M320,640 345,640 365,630 M322,645 335,690 358,750 M300,598 330,605 368,625 M255,675 310,672 328,660 M270,690 300,672 M250,735 275,710 335,750 358,752 M255,705 275,710 M385,820 415,830 412,865 385,885 310,905 M390,885 395,905 M160,732 162,870 88,830 28,845 M162,845 260,845 M85,832 85,900 72,945 28,955 M155,870 140,985 80,1020 70,950 M140,985 160,1000 220,990 228,965 235,1000 265,940 300,945 M265,940 262,910 275,895 M235,1000 240,1030 260,1060 310,1065 350,1020 362,990 315,975 M160,1000 180,1040 205,1060 120,1050 80,1020 M120,1050 100,1085 95,1162 M205,1060 215,1115 200,1160 M240,1065 240,1115 290,1145 M300,1065 300,1120 M28,1080 100,1085 M35,720 38,800 28,815 M80,1020 75,1060 28,1040 M215,1115 240,1120 M762,885 785,865 830,900 840,935 805,940 808,975 M762,885 770,960 M790,862 800,850 820,880 845,930 845,965 M870,1090 900,1090 915,1050 935,1050";
const specks =
  "M75,290 200,258 M65,305 90,280 150,268 M240,325 270,340 M330,140 380,146 M60,155 150,152 M75,172 100,178 M400,134 470,132 M410,142 460,140 M700,140 780,160 M590,154 600,154 M35,350 60,320 M40,335 75,300 M120,388 205,388 M90,440 120,395 M560,245 650,230 M600,255 645,262 M620,240 680,215 M30,450 50,450 M70,575 130,645 M65,590 100,630 M90,575 120,600 M130,650 185,685 M145,640 175,665 M55,660 80,660 M225,688 240,688 M1165,585 1220,540 1250,495 M1325,445 1345,455 M1385,475 1445,490 M1010,795 1040,720 M1035,700 1060,706 M975,820 1000,812 M965,850 965,885 M950,930 985,960 M965,935 1000,1000 M970,960 992,1010 M720,975 735,1030 M745,1045 790,1140 M560,970 563,1120 M1155,865 1160,910 1152,955 M1120,740 1130,820 M1195,1020 1290,1045 M1340,975 1380,1040 M1385,1075 1418,1140 M1090,1105 1140,1125 M1160,1130 1235,1155 M1005,1090 1050,1110 M1020,1130 1075,1120 M985,1130 1040,1150 M850,1060 860,1100 M920,1050 960,990 M1130,220 1170,235 M1085,205 1090,210 M1185,190 1195,190 M1435,255 1445,255 M215,146 230,146 M180,160 200,160 M385,960 405,962 M1285,265 1295,280 M1350,275 1370,275 M740,188 765,190 M640,205 700,180 M385,780 415,800 M705,820 715,845";

function AsiaMap() {
  return (
    <div className="h-[374px] w-[1016px] overflow-hidden border-2 border-[#b9b9b9] bg-white">
      <svg viewBox="28 47 1540 1115" preserveAspectRatio="none" className="block h-[371px] w-[746px]">
        <g strokeLinejoin="round">
          <path d={mainland} fill="#ece9dd" stroke="#8a877a" strokeWidth="4" />
          <path d={islands} fill="#ece9dd" stroke="#8a877a" strokeWidth="4" />
          <path d={caspian} fill="#fff" stroke="#8a877a" strokeWidth="4" />
          <path d={borders} fill="none" stroke="#858275" strokeWidth="4.600" />
          <path d={specks} fill="none" stroke="#848172" strokeWidth="7" strokeDasharray="8 7 4 9 10 5" />
          <circle cx="480" cy="557" r="5" fill="#8a8779" />
        </g>
        <path d="M1047,82H1100L1110,98V1112L1100,1130H1047L1037,1112V98Z" fill="#ff0000" opacity=".27" />
        <path fillRule="evenodd" d="M1048,99H1098V1110H1048ZM1060,118V1092H1086V118Z" fill="#ff2020" opacity=".32" />
        <path d="M1030,671H1056V629H1076V671H1104V697H1076V738H1056V697H1030Z" fill="#c44fdb" />
      </svg>
    </div>
  );
}

/* ---------- Project Properties dialog ---------- */
function Dialog() {
  return (
    <div className="absolute left-[31px] top-[33px] flex h-[1790px] w-[2604px] flex-col overflow-hidden rounded-[30px] bg-[#ececec]">
      <div className="flex h-[86px] shrink-0 items-center border-b-2 border-[#d5cfcd] bg-[#fdf2f0]">
        <div className="flex w-[1053px] gap-[24px] pl-[24px] pt-[3px]">
          <div className="h-[37px] w-[37px] rounded-full border border-[#e2463f] bg-[#ff5f57]" />
          <div className="h-[37px] w-[37px] rounded-full border border-[#cdc3c1] bg-[#e0d7d5]" />
          <div className="h-[37px] w-[37px] rounded-full border border-[#1dad2b] bg-[#28c840]" />
        </div>
        <T w={495} className="text-[38px] font-bold text-[#434040]">Project Properties — CRS</T>
      </div>
      <div className="flex flex-1">
        <div className="flex w-[455px] shrink-0 flex-col bg-[#5b5b5b]">
          <div className="mt-[1px] flex h-[71px] items-center rounded-[4px] border-[3px] border-[#a0a0a0] bg-white pl-[24px]">
            <SearchIcon className="h-[38px] w-[38px]" />
          </div>
          <div className="mt-[19px]">
            {sideItems.map(([name, w], i) => (
              <div key={name} className={"flex h-[109.500px] items-center text-[34.500px] " + (i === 3 ? "bg-[#efefef] pl-[20px] text-[#161616]" : "pl-[12px] text-white")}>
                <svg viewBox="0 0 32 32" className={"shrink-0 " + (i === 3 ? "h-[72px] w-[80px]" : "h-[76px] w-[77px]")}>{sideIcons[i]}</svg>
                <T w={w} className={i === 3 ? "ml-[21px]" : "ml-[23px]"}>{name}</T>
              </div>
            ))}
          </div>
        </div>
        <div className="flex w-[17px] shrink-0 items-center pl-[5px]"><Dots className="mt-[6px] h-[50px] border-l-[3px]" /></div>
        <div className="flex flex-1 flex-col">
          <T w={863} className="mt-[13px] h-[57px] self-start text-[37px] font-bold leading-[54px] text-[#1e1e1e]">Project Coordinate Reference System (CRS)</T>
          <div className="flex h-[1533px] w-[2123px] shrink-0 flex-col border-[3px] border-[#d3d3d3] bg-[#e8e8e8] pl-[30px] text-[#1e1e1e]">
            <div className="mt-[44px] flex h-[41px] items-center text-[37px]">
              <Check className="mr-[17px] h-[41px] w-[42px]" />
              <T w={787} className="pt-[2px]">No CRS (or unknown/non-Earth projection)</T>
            </div>
            <div className="mt-[32px] flex h-[71px] items-center text-[37px]">
              <T w={91} className="mr-[22px]">Filter</T>
              <div className="flex h-[71px] w-[1939px] items-center rounded-[5px] border-[3px] border-[#a6a6a6] bg-white pl-[24px]"><SearchIcon className="h-[38px] w-[38px]" /></div>
            </div>
            <div className="flex h-[87px] items-center pt-[3px] text-[37px] font-bold"><T w={900}>Recently Used Coordinate Reference Systems</T></div>
            <div className="flex h-[316px] w-[2052px] flex-col border-2 border-[#bbb] bg-white">
              <TableHead />
              <div className="h-[219px] overflow-hidden border-b-2 border-[#c0c0c0] text-[37px]">
                {recent.map(([a, aw, b, bw], i) => (
                  <div key={a} className={"flex h-[48.700px] items-center " + (i === 0 ? "text-white" : i % 2 ? "bg-[#f4f6f5]" : "bg-white")}>
                    <div className={"flex h-full w-[1324px] items-center pl-[10px] pt-[2px] " + (i === 0 ? "bg-gradient-to-b from-[#007af6] to-[#006be8]" : "")}><T w={aw}>{a}</T></div>
                    <div className={"flex h-full flex-1 items-center pl-[11px] pt-[2px] " + (i === 0 ? "bg-[#0066e4]" : "")}><T w={bw}>{b}</T></div>
                  </div>
                ))}
              </div>
              <div className="flex flex-1 bg-gradient-to-b from-white to-[#ececec]">
                <div className="flex w-[41px] items-center justify-center border-r-2 border-[#bbb]"><Tri d="l" className="h-[22px] w-[12px]" /></div>
              </div>
            </div>
            <div className="flex h-[12px] w-[2052px] items-center justify-center pl-[8px]"><Dots className="w-[50px] border-t-4" /></div>
            <div className="mb-[14px] flex h-[68px] items-center text-[37px] font-bold">
              <T w={832} className="mr-[843px]">Predefined Coordinate Reference Systems</T>
              <Check className="mb-[4px] mr-[15px] h-[41px] w-[42px]" />
              <T className="text-[28px] font-normal">Hide deprecated CRSs</T>
            </div>
            <div className="flex h-[419px] w-[2052px] flex-col border-2 border-[#bbb] bg-white">
              <TableHead />
              <div className="h-[325px] overflow-hidden border-b-2 border-[#c0c0c0] text-[37px]">
                {zones.map((z, i) => (
                  <div key={z} className={"flex h-[54.600px] items-center " + (i === 4 ? "bg-[#dcdcdc] text-black" : i % 2 ? "bg-white" : "bg-[#f4f6f5]")}>
                    <div className="w-[1324px] pl-[194px] pt-[1px]"><T w={z.endsWith("N") ? 464 : 461}>{"WGS 84 / UTM zone " + z}</T></div>
                    <div className="pl-[11px] pt-[1px]"><T w={z === "51N" ? 232 : 236}>{zoneIds[i]}</T></div>
                  </div>
                ))}
              </div>
              <div className="flex flex-1 bg-[#dfdfdf]">
                <div className="flex w-[41px] items-center justify-center border-r-2 border-[#bbb] bg-[#f7f7f7]"><Tri d="l" className="h-[22px] w-[12px]" /></div>
                <div className="w-[1879px] border-r-2 border-[#bbb] bg-gradient-to-b from-white to-[#ececec]" />
                <div className="w-[45px] border-r-2 border-[#bbb]" />
                <div className="flex w-[43px] items-center justify-center border-r-2 border-[#bbb] bg-[#f7f7f7]"><Tri d="r" className="h-[22px] w-[12px]" /></div>
                <div className="flex-1 bg-[#ececec]" />
              </div>
            </div>
            <div className="flex h-[14px] w-[2052px] items-center justify-center pl-[8px]"><Dots className="w-[50px] border-t-4" /></div>
            <div className="flex gap-[22px]">
              <div className="flex h-[375px] w-[1015px] border-2 border-[#b9b9b9] bg-white">
                <div className="flex flex-1 flex-col items-start overflow-hidden pl-[14px] text-[31px] leading-[40px]">
                  <T w={482} className="mt-[18px] text-[37px] font-bold">WGS 84 / UTM zone 53N</T>
                  <T w={177} className="mt-[42px] mb-[35px] font-bold">Properties</T>
                  <ul className="ml-[190px] leading-[39.800px]">
                    {[
                      <T w={212}>Units: meters</T>,
                      <div className="flex flex-col items-start"><T w={637}>Dynamic (relies on a datum which is not</T><T w={182}>plate-fixed)</T></div>,
                      <T w={328}>Celestial body: Earth</T>,
                      <T w={627}>Based on <i>World Geodetic System 1984</i></T>,
                    ].map((c, i) => (
                      <li key={i} className="flex gap-[9px]"><span className="mt-[12px] h-[14px] w-[13px] rounded-full bg-[#1e1e1e]" />{c}</li>
                    ))}
                  </ul>
                </div>
                <div className="flex w-[42px] flex-col border-l-2 border-[#bbb] bg-[#dfdfdf]">
                  <div className="flex h-[41px] items-center justify-center border-b-2 border-[#bbb] bg-[#f7f7f7]"><Tri d="u" className="h-[13px] w-[23px]" /></div>
                  <div className="h-[83px] border-b-2 border-[#bbb] bg-gradient-to-r from-white to-[#efefef]" />
                  <div className="flex-1" />
                  <div className="flex h-[43px] items-center justify-center border-t-2 border-[#bbb] bg-[#f7f7f7]"><Tri d="d" className="h-[13px] w-[23px]" /></div>
                </div>
              </div>
              <AsiaMap />
            </div>
          </div>
          <div className="mt-[19px] -ml-[4px] flex w-[2126px] gap-[18px]">
            <Btn w={84}>Help</Btn>
            <Btn w={104}>Apply</Btn>
            <div className="flex-1" />
            <Btn w={125}>Cancel</Btn>
            <Btn w={51} primary>OK</Btn>
          </div>
        </div>
      </div>
    </div>
  );
}

/* ---------- QGIS main window ---------- */
const tree: [string, string, number, string][] = [
  ["fold", "/Volumes", 74, "r"], ["fstar", "Favorites", 72, ""], ["book", "Spatial Bookmarks", 146, "r"], ["fhome", "Home", 46, "r"], ["fold", "/ (Macintosh HD)", 132, "r"],
  ["tpkg", "GeoPackage", 99, ""], ["tfeather", "SpatiaLite", 78, ""], ["pg", "PostgreSQL", 94, ""], ["hana", "SAP HANA", 83, ""], ["mssql", "MS SQL Server", 119, ""],
  ["ora", "Oracle", 52, ""], ["globe", "WMS/WMTS", 98, ""], ["vt", "Vector Tiles", 94, ""], ["xyz", "XYZ Tiles", 75, "d"],
];
const DockTitle = ({ children, w }: { children: string; w: number }) => (
  <div className="flex h-[22px] items-center pl-[5px] pr-[2px] text-[15.500px] text-[#222]">
    <T w={w}>{children}</T>
    <div className="flex-1" />
    <svg viewBox="0 0 36 16" className="h-[15px] w-[34px]">
      <g fill="#f5f5f5" stroke="#555" strokeWidth="1.300">
        <rect x="1" y="1" width="14" height="14" rx="3" /><rect x="6" y="4" width="6" height="6" /><rect x="4" y="7" width="5" height="5" />
        <rect x="20" y="1" width="14" height="14" rx="3" /><path d="M23.500 4.500l7 7M30.500 4.500l-7 7" strokeWidth="2.400" />
      </g>
    </svg>
  </div>
);
const island =
  "M115,817L131,844L127,855L120,860L110,880L108,897L114,912L61,988L63,992L90,955L118,920L132,950L142,973L148,975L156,970L165,955L180,938L195,928L215,932L245,938L252,930L268,908L290,896L300,897L298,905L278,935L265,954L275,958L291,957L293,990L280,1018L278,1036L265,1048L243,1063L225,1070L214,1077L205,1090L191,1106L187,1122L170,1155L156,1172L165,1175L165,1190L158,1205L168,1225L176,1222L174,1240L182,1270L195,1288L198,1299L208,1302L228,1297L235,1305L240,1318L255,1338L270,1342L290,1342L310,1354L326,1362L330,1370L322,1376L336,1382L328,1400L336,1420L333,1432L343,1437L350,1455L366,1482L375,1484L382,1494L400,1506L411,1508L435,1488L455,1460L470,1445L490,1438L515,1434L532,1420L538,1405L550,1362L563,1355L568,1361L585,1363L595,1358L597,1350L635,1335L642,1338L665,1328L680,1327L687,1335L688,1372L700,1407L715,1415L745,1426L755,1436L765,1461L770,1464L800,1463L822,1460L850,1440L872,1413L870,1406L893,1382L895,1370L935,1373L950,1368L962,1345L975,1328L983,1328L990,1336L1002,1335L1013,1350L1018,1378L1023,1370L1058,1400L1062,1397L1080,1396L1093,1380L1102,1392L1130,1400L1140,1390L1158,1382L1176,1354L1178,1325L1186,1323L1181,1248L1185,1245L1187,1226L1205,1208L1219,1182L1252,1201L1260,1198L1290,1168L1310,1138L1317,1118L1336,1115L1347,1103L1397,1100L1413,1060L1430,1025L1445,960L1459,895L1464,842L1456,838L1464,810L1467,770L1466,715L1471,708L1473,660L1487,646L1480,636L1460,652L1435,670L1425,675L1395,695L1375,700L1346,713L1335,730L1318,758L1295,790L1272,808L1243,818L1220,821L1216,809L1188,787L1162,750L1150,720L1142,660L1135,625L1128,582L1127,550L1131,503L1141,470L1150,450L1162,438L1172,415L1180,395L1205,377L1230,360L1242,357L1250,335L1249,320L1257,295L1260,240L1266,215L1263,190L1256,170L1243,152L1225,140L1180,119L1128,99L1122,100L1070,92V71H1067V91L1003,92L970,102L945,108L925,115L905,118L885,128L860,142L840,148L815,168L790,182L760,202L759,220L765,240L762,268L753,283L745,275L708,232L697,226L680,232L655,243L595,257L593,252L590,260L545,275L512,290L498,318L468,348L450,382L420,418L385,462L382,474L350,484L330,495L316,497L310,510L305,512L318,548L314,556L322,583L340,586L355,588L366,600L367,608L360,620L325,638L315,648L298,650L291,658L290,675L280,694L270,690L262,682L248,674L233,682L210,705L197,726L197,732L180,742L168,748L134,776L115,817Z" +
  "M600,570Q602,535 615,515Q630,500 657,501L665,512L680,530L679,542L672,546L655,565L630,578L612,587L608,592L601,585Z" +
  "M424,897L430,889L448,882L458,886L458,905L450,914L426,904Z" +
  "M374,880L377,871L378,882L375,886Z" +
  "M861,937L885,909L908,910L920,922L934,955V995L920,1035L900,1088L903,1092L909,1150L909,1188L900,1208L902,1218L888,1250L887,1278L883,1280L870,1263L852,1247L843,1228L833,1185L815,1145L808,1125L810,1108L838,1090L852,1050L850,1020L836,1004L848,985L853,948L860,948Z" +
  "M1040,1264L1048,1266L1040,1284L1035,1280Z";

const pad = "h-[20px] w-[21px]";
function MainWindow() {
  return (
    <div className="absolute left-[2316px] top-[50px] flex h-[1223px] w-[1956px] flex-col bg-[#1d4f80]">
      <div className="h-[20px] shrink-0 bg-gradient-to-r from-[#5db0dc] from-22% via-[#f0b840] via-24% to-[#3f87c8] to-80%" />
      <div className="-mt-[18px] flex flex-1 flex-col overflow-hidden rounded-[18px] bg-[#ececec]">
        <div className="flex h-[36px] shrink-0 items-center border-b border-[#d3cfc8] bg-[#faf6ee]">
          <div className="flex w-[872px] gap-[10px] pl-[10px]">
            <div className="h-[16px] w-[16px] rounded-full bg-[#ff5f57]" />
            <div className="h-[16px] w-[16px] rounded-full bg-[#febc2e]" />
            <div className="h-[16px] w-[16px] rounded-full bg-[#28c840]" />
          </div>
          <T w={208} className="text-[16.500px] font-bold text-[#434040]">*Untitled Project — QGIS</T>
        </div>
        {bars.map((b, i) => <Toolbar key={i} items={b} />)}
        <div className="flex flex-1">
          <div className="flex w-[381px] shrink-0 flex-col pl-px pt-[3px]">
            <DockTitle w={55}>Browser</DockTitle>
            <div className="flex h-[42px] items-center gap-[11.500px] pl-[10px]">
              {["add", "refresh", "funnel", "up", "info"].map((n) => <Ico key={n} n={n} className={pad} />)}
            </div>
            <div className="flex h-[349px] flex-col border-2 border-[#bdbdbd] bg-white">
              <div className="flex h-[328px] overflow-hidden border-b border-[#bbb]">
                <div className="flex-1 text-[17px] text-[#222]">
                  {tree.map(([ic, label, w, a]) => (
                    <div key={label} className="flex h-[23.300px] items-center pl-[6px]">
                      <div className="flex w-[18px] items-center">
                        {a === "r" && <Tri d="r" className="h-[10px] w-[5px]" />}
                        {a === "d" && <Tri d="d" className="h-[6px] w-[10px]" />}
                      </div>
                      <Ico n={ic} className="mr-[9px] h-[19px] w-[20px]" />
                      <T w={w} className="leading-[23px]">{label}</T>
                    </div>
                  ))}
                </div>
                <div className="flex w-[18px] flex-col border-l border-[#bbb] bg-[#dfdfdf]">
                  <div className="flex h-[17px] items-center justify-center border-b border-[#bbb] bg-[#f7f7f7]"><Tri d="u" className="h-[6px] w-[9px]" /></div>
                  <div className="h-[111px] border-b border-[#bbb] bg-gradient-to-r from-white to-[#efefef]" />
                  <div className="flex-1" />
                  <div className="flex h-[18px] items-center justify-center border-t border-[#bbb] bg-[#f7f7f7]"><Tri d="d" className="h-[6px] w-[9px]" /></div>
                </div>
              </div>
              <div className="flex flex-1 bg-[#dfdfdf]">
                <div className="flex w-[17px] items-center justify-center border-r border-[#bbb] bg-[#f7f7f7]"><Tri d="l" className="h-[10px] w-[6px]" /></div>
                <div className="w-[266px] border-r border-[#bbb] bg-gradient-to-b from-white to-[#efefef]" />
                <div className="w-[59px] border-r border-[#bbb]" />
                <div className="flex w-[18px] items-center justify-center border-r border-[#bbb] bg-[#f7f7f7]"><Tri d="r" className="h-[10px] w-[6px]" /></div>
                <div className="flex-1 bg-[#ececec]" />
              </div>
            </div>
            <div className="flex h-[10px] items-center justify-center"><Dots className="w-[22px] border-t-2" /></div>
            <DockTitle w={44}>Layers</DockTitle>
            <div className="flex h-[41px] items-center gap-[11.500px] pl-[10px]">
              {["brush", "grp", "eye", "funnel2", "eps"].map((n) => <Ico key={n} n={n} className={pad} />)}
              <Tri d="d" className="-ml-[5px] h-[6px] w-[10px]" />
              {["down", "up", "del"].map((n) => <Ico key={n} n={n} className={pad} />)}
            </div>
            <div className="flex-1 border border-[#bdbdbd] bg-white text-[17px]">
              <div className="flex h-[24px] items-center bg-gradient-to-r from-[#0066e4] from-15% to-[#0076f2] to-15% pl-[30px] text-white">
                <div className="flex h-[17px] w-[17px] items-center justify-center bg-white"><svg viewBox="0 0 24 24" className="h-[14px] w-[14px]"><path d="M5 12l5 8L18 3" fill="none" stroke="#111" strokeWidth="3.500" /></svg></div>
                <div className="mr-[8px] ml-[8px] h-[21px] w-[21px] border border-[#9e2f3a] bg-[#c53b47]" />
                <T w={108} className="border-b-2 border-white font-bold leading-[19px]">Koyama-utm</T>
              </div>
              <div className="flex h-[23px] items-center pl-[30px] text-[#858585]">
                <div className="h-[17px] w-[17px] border border-[#bbb] bg-white" />
                <div className="mr-[9px] ml-[8px] h-[20px] w-[21px] border border-[#7a5c9c] bg-[#9c7abb]" />
                <T w={56} className="font-semibold italic">export</T>
              </div>
            </div>
          </div>
          <div className="flex w-[8px] items-center justify-center"><Dots className="h-[22px] border-l-2" /></div>
          <div className="mt-[2px] flex-1 overflow-hidden border-l-2 border-t-2 border-[#b8b8b8] bg-white">
            <svg viewBox="0 0 1568 1568" preserveAspectRatio="none" className="mt-[39px] ml-[144px] block h-[800px] w-[1200px]">
              <g stroke="#1c2a2c" strokeLinejoin="round">
                <path d={island} fill="#c53b47" fillRule="evenodd" strokeWidth="2" />
                <path d="M100,945L118,936L122,955L108,960L112,975L126,972L128,958M95,925L105,918L98,930L83,926M85,965L95,965L90,978M96,968L100,945" fill="#c53b47" strokeWidth="2" />
                <path d="M96,970L85,998L69,1020M126,975L112,998L95,1028M1403,1086L1426,1124M1262,1198L1266,1224M1077,1396L1078,1412M1243,155L1249,146M1264,190L1269,177M1093,1370V1388M167,1245L174,1228M328,1435L337,1424M1424,1028L1427,1042M305,513H312" fill="none" strokeWidth="2.400" />
                <path d="M692,532L676,554M760,290L766,235M770,203L785,196M708,238L740,272M650,570L655,567M536,283L590,266M632,253L635,256M503,312L498,318M475,348L400,455M1034,1270V1272M1050,1276V1278" fill="none" strokeWidth="3" strokeDasharray="3 14" />
              </g>
            </svg>
          </div>
        </div>
        <div className="flex h-[40px] shrink-0 items-center border-t border-[#c3c3c3] pl-[6px]">
          <div className="mr-[542px] flex h-[31px] w-[276px] shrink-0 items-center rounded-[2px] border border-[#a3a3a3] bg-white pl-[10px] text-[16px] text-[#6e6e6e]">
            <SearchIcon className="mr-[9px] h-[16px] w-[17px]" />
            <T w={155}>Type to locate (⌘K)</T>
          </div>
          <div className="shrink-0 pt-[4px] [zoom:0.4250]"><StatusBar small /></div>
        </div>
      </div>
    </div>
  );
}

export default function App() {
  return (
    <div className="relative h-[1992px] w-[4276px] overflow-hidden bg-white font-['Inter',sans-serif] [font-optical-sizing:none] [zoom:0.957904]">
      <div className="absolute left-0 top-[4px] flex h-[1981px] w-[2804px] flex-col overflow-hidden border-r-2 border-[#c9c9c9] bg-white">
        <svg viewBox="0 4 2804 1900" className="block h-[1900px] w-[2804px] shrink-0">
          <path d="M190,0L135,40 31,121 0,148V1456L14,1455 31,1442V600H1850V37L1856,25 1862,20V0Z" fill="#c53b47" stroke="#222" strokeWidth="2.500" />
        </svg>
        <div className="flex flex-1 items-center border-t-2 border-[#b9b9b9] bg-[#ececec] pl-[126px] pt-[10px]"><StatusBar /></div>
        <div className="pointer-events-none absolute left-[31px] top-[33px] h-[1790px] w-[2604px] rounded-[30px] shadow-[0_48px_110px_rgba(0,0,0,0.52),0_0_4px_rgba(0,0,0,0.5)]" />
        <Dialog />
      </div>
      <MainWindow />
      <div className="absolute left-[2386px] top-[1896px] h-[96px] w-[317px] border-[15px] border-[#ff0000]" />
      <svg viewBox="2480 1670 90 240" className="absolute left-[2480px] top-[1670px] h-[240px] w-[90px]">
        <path d="M2508,1680L2534,1718 2522,1720.500 2551,1900H2537L2508,1723 2494,1725.500Z" fill="#ff0000" />
      </svg>
    </div>
  );
}
